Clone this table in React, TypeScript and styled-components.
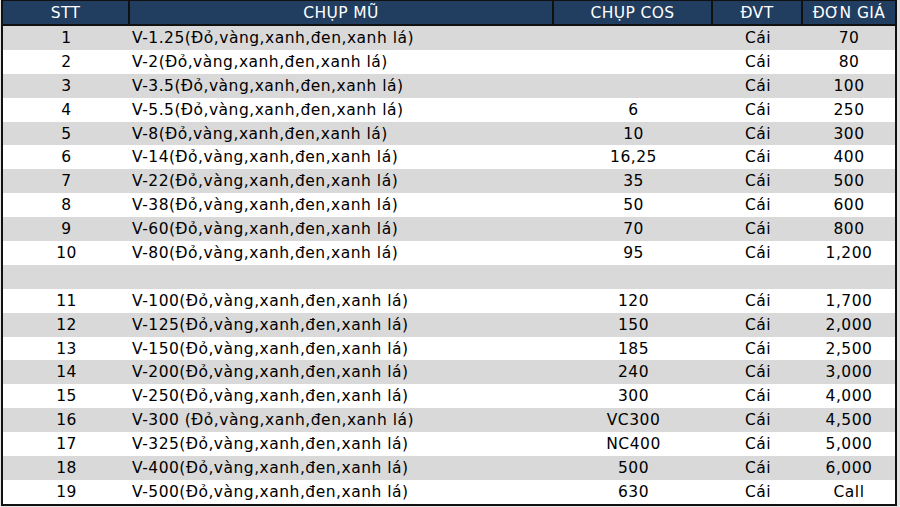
import React from 'react'
import styled, { createGlobalStyle } from 'styled-components'

interface Item {
    stt?: number
    name?: string
    cos?: string
    unit?: string
    price?: string
}

const items: Item[] = [
    { stt: 1, name: 'V-1.25(Đỏ,vàng,xanh,đen,xanh lá)', cos: '', unit: 'Cái', price: '70' },
    { stt: 2, name: 'V-2(Đỏ,vàng,xanh,đen,xanh lá)', cos: '', unit: 'Cái', price: '80' },
    { stt: 3, name: 'V-3.5(Đỏ,vàng,xanh,đen,xanh lá)', cos: '', unit: 'Cái', price: '100' },
    { stt: 4, name: 'V-5.5(Đỏ,vàng,xanh,đen,xanh lá)', cos: '6', unit: 'Cái', price: '250' },
    { stt: 5, name: 'V-8(Đỏ,vàng,xanh,đen,xanh lá)', cos: '10', unit: 'Cái', price: '300' },
    { stt: 6, name: 'V-14(Đỏ,vàng,xanh,đen,xanh lá)', cos: '16,25', unit: 'Cái', price: '400' },
    { stt: 7, name: 'V-22(Đỏ,vàng,xanh,đen,xanh lá)', cos: '35', unit: 'Cái', price: '500' },
    { stt: 8, name: 'V-38(Đỏ,vàng,xanh,đen,xanh lá)', cos: '50', unit: 'Cái', price: '600' },
    { stt: 9, name: 'V-60(Đỏ,vàng,xanh,đen,xanh lá)', cos: '70', unit: 'Cái', price: '800' },
    { stt: 10, name: 'V-80(Đỏ,vàng,xanh,đen,xanh lá)', cos: '95', unit: 'Cái', price: '1,200' },
    {},
    { stt: 11, name: 'V-100(Đỏ,vàng,xanh,đen,xanh lá)', cos: '120', unit: 'Cái', price: '1,700' },
    { stt: 12, name: 'V-125(Đỏ,vàng,xanh,đen,xanh lá)', cos: '150', unit: 'Cái', price: '2,000' },
    { stt: 13, name: 'V-150(Đỏ,vàng,xanh,đen,xanh lá)', cos: '185', unit: 'Cái', price: '2,500' },
    { stt: 14, name: 'V-200(Đỏ,vàng,xanh,đen,xanh lá)', cos: '240', unit: 'Cái', price: '3,000' },
    { stt: 15, name: 'V-250(Đỏ,vàng,xanh,đen,xanh lá)', cos: '300', unit: 'Cái', price: '4,000' },
    { stt: 16, name: 'V-300 (Đỏ,vàng,xanh,đen,xanh lá)', cos: 'VC300', unit: 'Cái', price: '4,500' },
    { stt: 17, name: 'V-325(Đỏ,vàng,xanh,đen,xanh lá)', cos: 'NC400', unit: 'Cái', price: '5,000' },
    { stt: 18, name: 'V-400(Đỏ,vàng,xanh,đen,xanh lá)', cos: '500', unit: 'Cái', price: '6,000' },
    { stt: 19, name: 'V-500(Đỏ,vàng,xanh,đen,xanh lá)', cos: '630', unit: 'Cái', price: 'Call' },
]

const App = () => {
    return (
        <>
            <GlobalStyle />
            <Sheet>
                <HeaderRow>
                    <HeadCell>STT</HeadCell>
                    <HeadCell>CHỤP MŨ</HeadCell>
                    <HeadCell>CHỤP COS</HeadCell>
                    <HeadCell>ĐVT</HeadCell>
                    <HeadCell $last>ĐƠN GIÁ</HeadCell>
                </HeaderRow>
                {items.map((it, i) => (
                    <Row key={i} $shaded={i % 2 === 0}>
                        <Cell>{it.stt}</Cell>
                        <Cell $left>{it.name}</Cell>
                        <Cell>{it.cos}</Cell>
                        <Cell>{it.unit}</Cell>
                        <Cell>{it.price}</Cell>
                    </Row>
                ))}
            </Sheet>
        </>
    )
}

const GlobalStyle = createGlobalStyle`
    body {
        margin: 0;
        background: #e4e4e4;
        font-family: "DejaVu Sans", "Liberation Sans", sans-serif;
    }
`

const Sheet = styled.div`
    width: 892px;
    margin-left: 1px;
    border: 2px solid #111;
    border-top-width: 1px;
    background: #fff;
`

const HeaderRow = styled.div`
    display: grid;
    grid-template-columns: 127px 424px 159px 90px 1fr;
    height: 23px;
    background: #213d5f;
    border-bottom: 2px solid #111;
`

const HeadCell = styled.div<{ $last?: boolean }>`
    display: flex;
    align-items: center;
    justify-content: center;
    color: #fff;
    font-size: 15.5px;
    letter-spacing: 0.4px;
    border-right: ${p => (p.$last ? 'none' : '2px solid #111')};
`

const Row = styled.div<{ $shaded: boolean }>`
    display: grid;
    grid-template-columns: 127px 424px 159px 90px 1fr;
    height: 23.9px;
    background: ${p => (p.$shaded ? '#d9d9d9' : '#fff')};
`

const Cell = styled.div<{ $left?: boolean }>`
    display: flex;
    align-items: center;
    justify-content: ${p => (p.$left ? 'flex-start' : 'center')};
    padding-left: ${p => (p.$left ? '2px' : '0')};
    color: #000;
    font-size: 15.5px;
    letter-spacing: 0.5px;
    white-space: nowrap;
`

export default App
